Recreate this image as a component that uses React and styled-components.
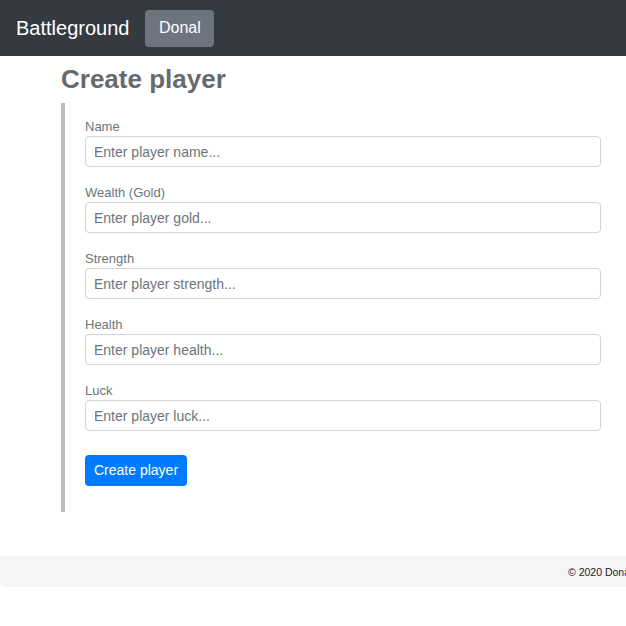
import React from "react";
import styled, { createGlobalStyle } from "styled-components";

const Global = createGlobalStyle`
  html, body { margin: 0; padding: 0; background: #fff; overflow-x: hidden; }
  body { font-family: "Liberation Sans", Arial, sans-serif; color: #212529; }
  * { box-sizing: border-box; }
`;

const Navbar = styled.nav`
  height: 56px;
  background: #343a40;
  display: flex;
  align-items: center;
  padding: 0 16px;
  gap: 16px;
`;

const Brand = styled.span`
  color: #fff;
  font-size: 20px;
  line-height: 30px;
`;

const NavButton = styled.button`
  background: #6c757d;
  color: #fff;
  border: none;
  border-radius: 4px;
  font-family: inherit;
  font-size: 16px;
  line-height: 24px;
  padding: 6.5px 13.5px;
`;

const Main = styled.main`
  padding: 0 25px 0 61px;
`;

const Title = styled.h1`
  margin: 8px 0 8px;
  font-size: 26px;
  line-height: 1.2;
  font-weight: bold;
  color: #666a6e;
`;

const Form = styled.form`
  border-left: 4px solid #bdbdbd;
  padding: 15px 0 26px 20px;
  display: flex;
  flex-direction: column;
  align-items: stretch;
`;

const Group = styled.div`
  display: flex;
  flex-direction: column;
  margin-bottom: 17px;
`;

const Label = styled.label`
  display: block;
  font-size: 13px;
  line-height: 18px;
  color: #6c757d;
`;

const Input = styled.input`
  height: 31px;
  border: 1px solid #ced4da;
  border-radius: 4px;
  padding: 4px 8px;
  font-family: inherit;
  font-size: 14px;
  line-height: 21px;
  color: #495057;
  &::placeholder { color: #6c757d; opacity: 1; }
`;

const Submit = styled.button`
  align-self: flex-start;
  margin-top: 7px;
  height: 31px;
  background: #007bff;
  color: #fff;
  border: none;
  border-radius: 4px;
  padding: 0 9px;
  font-family: inherit;
  font-size: 14px;
  line-height: 31px;
`;

const Footer = styled.footer`
  margin-top: 44px;
  height: 31px;
  background: #f5f5f5;
  border-radius: 0 0 0 6px;
  display: flex;
  align-items: center;
  padding-left: 568px;
  overflow: hidden;
  white-space: nowrap;
  font-size: 10.5px;
  color: #212529;
`;

const fields = [
  ["Name", "Enter player name..."],
  ["Wealth (Gold)", "Enter player gold..."],
  ["Strength", "Enter player strength..."],
  ["Health", "Enter player health..."],
  ["Luck", "Enter player luck..."],
];

export default function App() {
  return (
    <>
      <Global />
      <Navbar>
        <Brand>Battleground</Brand>
        <NavButton>Donal</NavButton>
      </Navbar>
      <Main>
        <Title>Create player</Title>
        <Form onSubmit={(e) => e.preventDefault()}>
          {fields.map(([label, ph]) => (
            <Group key={label}>
              <Label>{label}</Label>
              <Input placeholder={ph} />
            </Group>
          ))}
          <Submit type="submit">Create player</Submit>
        </Form>
      </Main>
      <Footer>© 2020 Donal</Footer>
    </>
  );
}
